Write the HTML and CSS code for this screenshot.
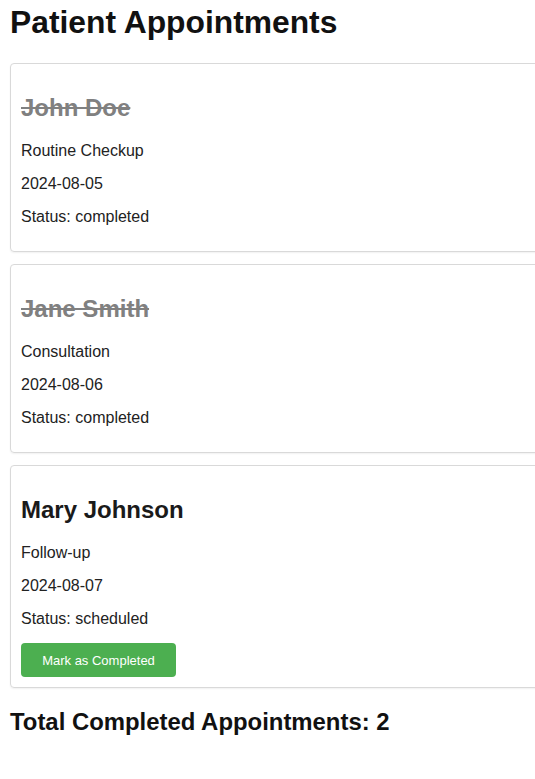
FILE: index.html
```html
<!DOCTYPE html>
<html>
<head>
<meta charset="utf-8">
<link rel="stylesheet" href="styles.css">
</head>
<body>
<h1 class="title">Patient Appointments</h1>
<div class="list">
  <div class="card">
    <h3 class="name done">John Doe</h3>
    <p>Routine Checkup</p>
    <p>2024-08-05</p>
    <p>Status: completed</p>
  </div>
  <div class="card">
    <h3 class="name done">Jane Smith</h3>
    <p>Consultation</p>
    <p>2024-08-06</p>
    <p>Status: completed</p>
  </div>
  <div class="card">
    <h3 class="name">Mary Johnson</h3>
    <p>Follow-up</p>
    <p>2024-08-07</p>
    <p>Status: scheduled</p>
    <button class="btn">Mark as Completed</button>
  </div>
</div>
<h3 class="total">Total Completed Appointments: 2</h3>
</body>
</html>
```
FILE: styles.css
```css
html, body {
  overflow: hidden;
}
body {
  margin: 0;
  padding: 4px 10px;
  font-family: "Liberation Sans", Arial, sans-serif;
  color: #222;
  background: #fff;
}
.title {
  margin: 0 0 22px;
  font-size: 31.8px;
  font-weight: bold;
  color: #111;
}
.list {
  width: 620px;
}
.card {
  border: 1px solid #d9d9d9;
  border-radius: 4px;
  padding: 10px 10px 10px;
  margin-bottom: 12px;
  box-shadow: 0 1px 2px rgba(0,0,0,0.06);
}
.name {
  margin: 20px 0;
  font-size: 24px;
  font-weight: bold;
  color: #1a1a1a;
}
.name.done {
  color: #808080;
  text-decoration: line-through;
}
.card p {
  margin: 15px 0;
  font-size: 16px;
  color: #222;
}
.btn {
  display: block;
  margin: 15px 0 0;
  padding: 9px 19px;
  background: #4caf50;
  color: #fff;
  border: none;
  border-radius: 4px;
  font-family: "Liberation Sans", Arial, sans-serif;
  font-size: 13px;
  width: 155px;
  height: 34px;
}
.total {
  margin: 20px 0;
  font-size: 23.9px;
  font-weight: bold;
  color: #111;
}
```
